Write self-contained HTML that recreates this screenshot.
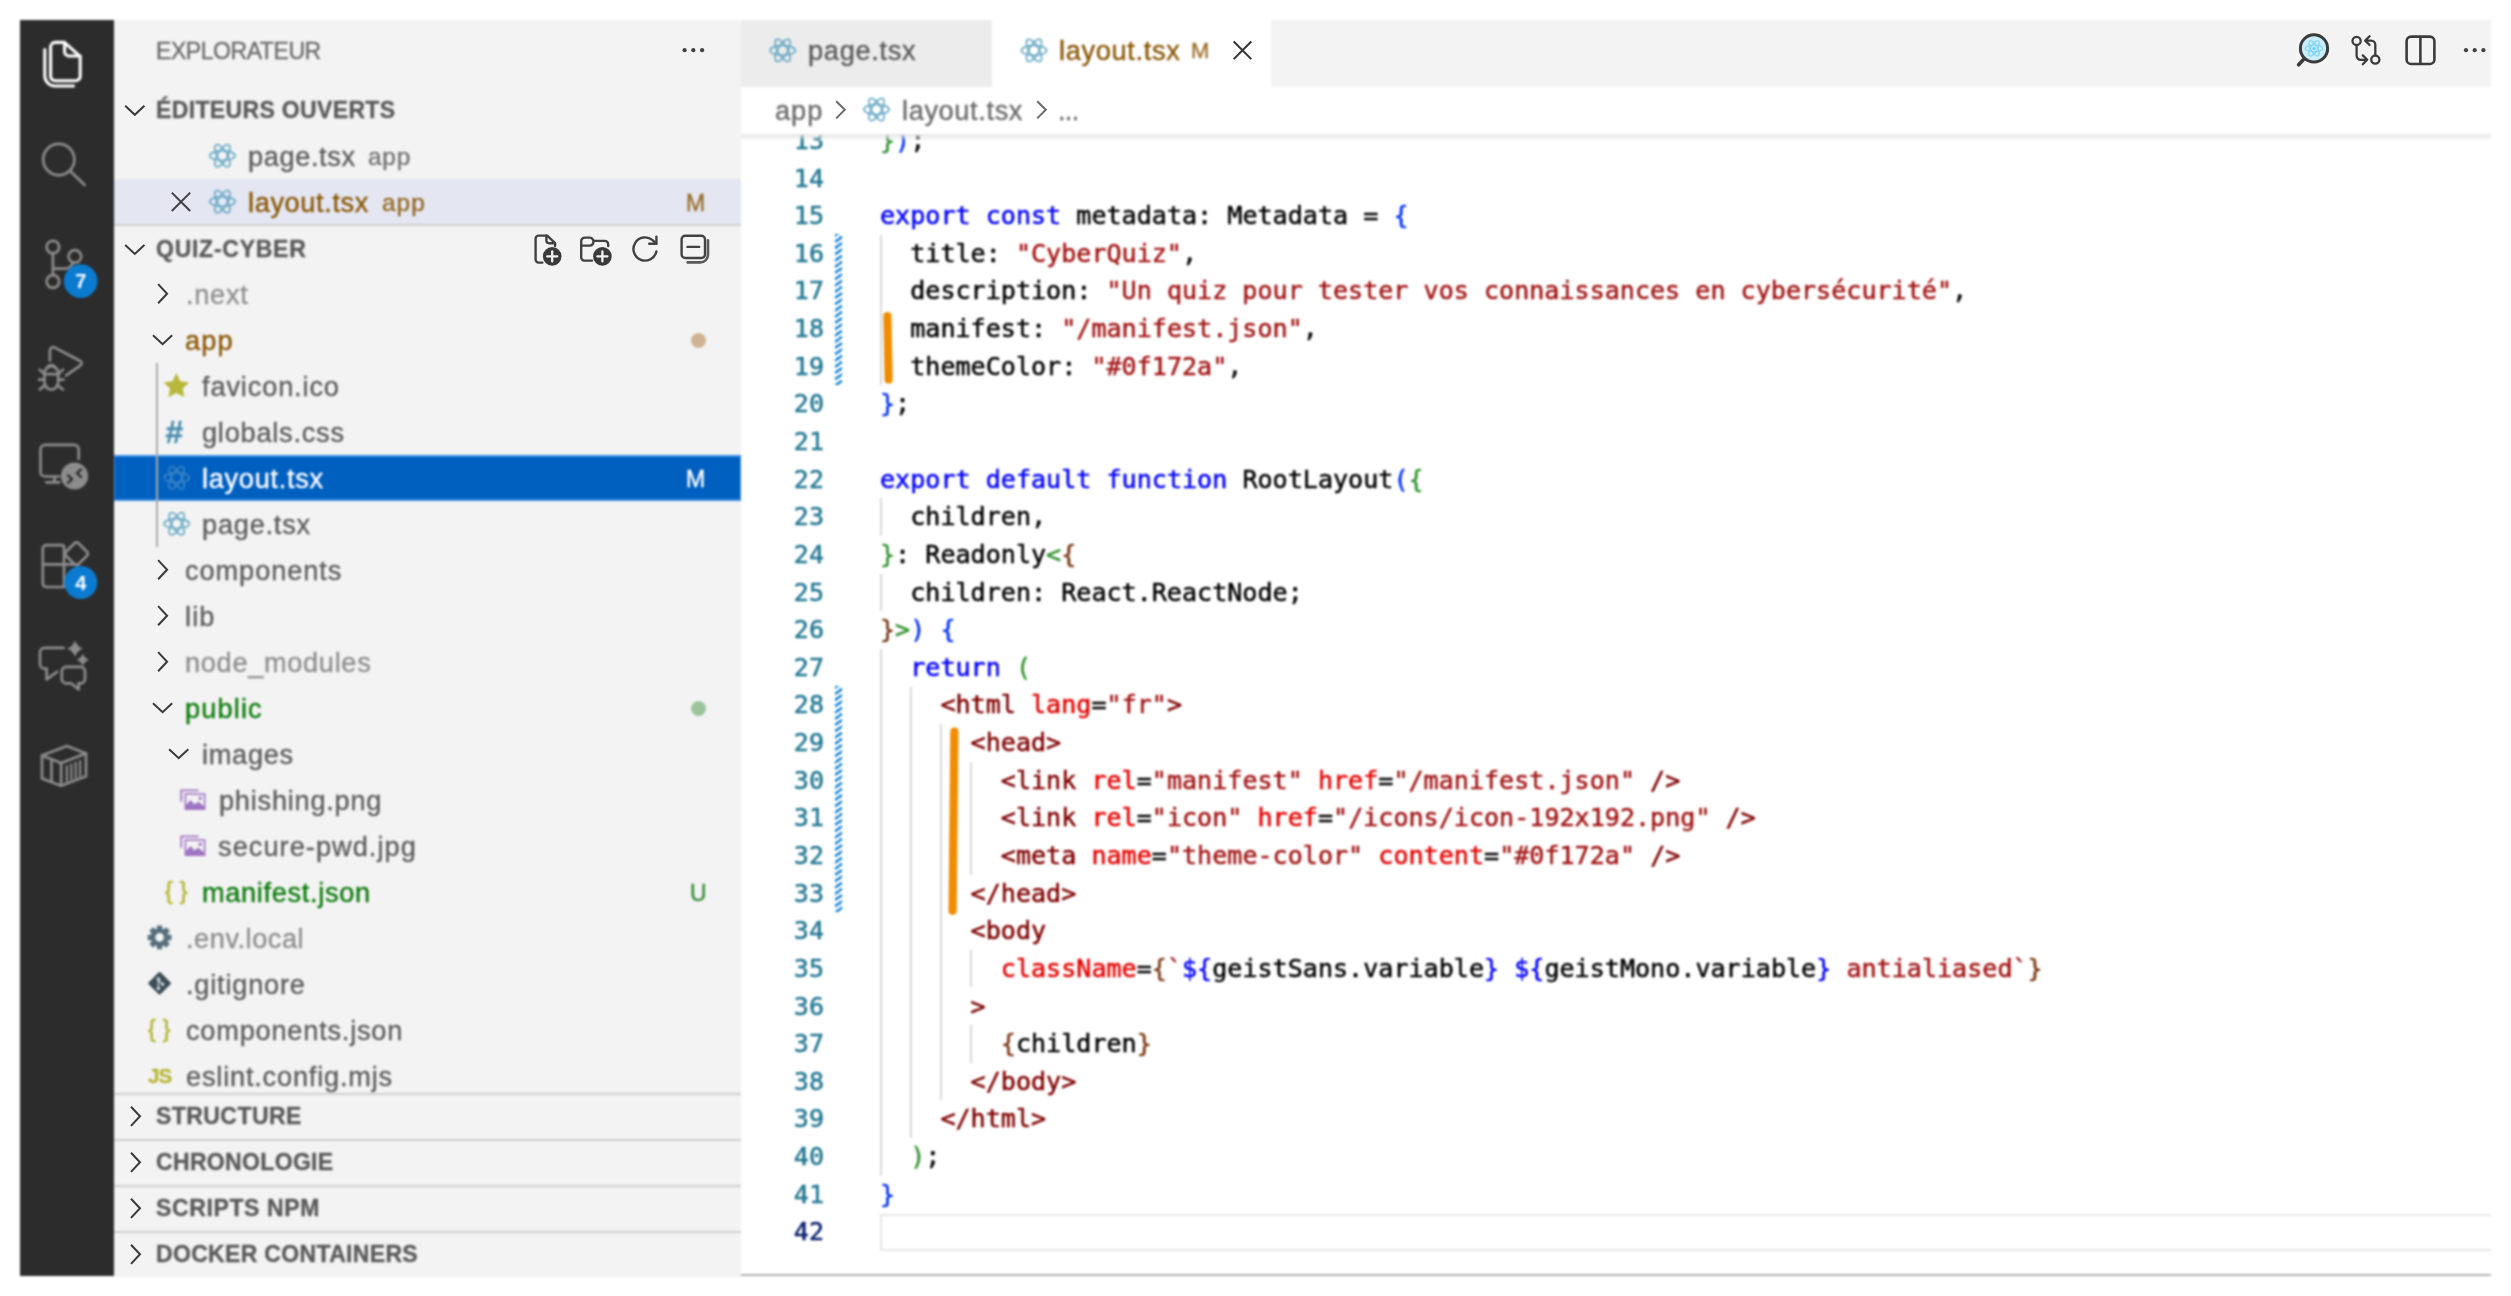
<!DOCTYPE html>
<html lang="fr"><head><meta charset="utf-8"><title>layout.tsx — quiz-cyber</title>
<style>
*{box-sizing:border-box;margin:0;padding:0}
html,body{width:2511px;height:1296px;background:#fff;overflow:hidden}
body{position:relative;font-family:"Liberation Sans", "DejaVu Sans", sans-serif;-webkit-font-smoothing:antialiased}
.abs{position:absolute}
#act{left:20px;top:20px;width:94px;height:1256px;background:#2c2c2c}
#side{left:114px;top:20px;width:627px;height:1256px;background:#f3f3f3;overflow:hidden}
#ed{left:741px;top:20px;width:1750px;height:1256px;background:#fff;overflow:hidden}
.t{will-change:transform;position:absolute;white-space:pre;line-height:46px;height:46px;font-size:27.18px;color:#5c5c5c;-webkit-text-stroke:0.35px currentColor}
.b{font-weight:bold}
.hd{font-size:23px;font-weight:bold;color:#5a5a5a}
.mod{color:#895503}
.unt{color:#0a7a0a}
.ign{color:#8e8e90}
.desc{font-size:24.4px;opacity:.9}
.code{will-change:transform;position:absolute;white-space:pre;font-family:"DejaVu Sans Mono", "Liberation Mono", monospace;font-size:25.09px;line-height:37.636px;height:37.636px;color:#000;-webkit-text-stroke:0.5px currentColor}
.ln{will-change:transform;position:absolute;white-space:pre;font-family:"DejaVu Sans Mono", "Liberation Mono", monospace;font-size:25.09px;line-height:37.636px;height:37.636px;color:#237893;text-align:right;width:60px;-webkit-text-stroke:0.5px currentColor}
.k{color:#0000ff}.s{color:#a31515}.tg{color:#800000}.at{color:#e50000}
.b1{color:#0431fa}.b2{color:#319331}.b3{color:#7b3814}
.ig{position:absolute;width:2px;background:#d8d8d8}
svg{position:absolute;overflow:visible}
</style></head>
<body>
<div id="root" style="position:absolute;left:0;top:0;width:2511px;height:1296px;filter:blur(0.8px)">
<div id="act" class="abs"></div>
<div id="side" class="abs"></div>
<div id="ed" class="abs"></div>
<div class="abs" style="left:114px;top:178.7px;width:627px;height:46.0px;background:#e4e6f1"></div>
<div class="abs" style="left:114px;top:454.7px;width:627px;height:46.0px;background:#0060c0;border:2px solid #3b8fe6;border-left-width:1px;border-right-width:1px"></div>
<div class="abs" style="left:114px;top:224.2px;width:627px;height:2px;background:#d0d0d0"></div>
<div class="abs" style="left:114px;top:1092.6px;width:627px;height:2px;background:#cfcfcf"></div>
<div class="abs" style="left:114px;top:1138.6px;width:627px;height:2px;background:#cfcfcf"></div>
<div class="abs" style="left:114px;top:1184.6px;width:627px;height:2px;background:#cfcfcf"></div>
<div class="abs" style="left:114px;top:1230.6px;width:627px;height:2px;background:#cfcfcf"></div>
<div class="t " style="left:155.8px;top:27.9px;letter-spacing:-0.44px;font-size:23px;color:#6a6a6a">EXPLORATEUR</div>
<div class="t hd" style="left:155.8px;top:87.2px;letter-spacing:0.35px;">ÉDITEURS OUVERTS</div>
<div class="t hd" style="left:155.8px;top:225.7px;letter-spacing:0.74px;">QUIZ-CYBER</div>
<div class="t " style="left:248.4px;top:133.7px;letter-spacing:0.62px;">page.tsx</div>
<div class="t desc" style="left:368.3px;top:134.2px;letter-spacing:0.80px;color:#626262">app</div>
<div class="t mod" style="left:248.4px;top:179.7px;letter-spacing:0.62px;">layout.tsx</div>
<div class="t desc mod" style="left:382.1px;top:180.2px;letter-spacing:1.00px;">app</div>
<div class="t mod" style="left:686.1px;top:179.6px;letter-spacing:2.54px;font-size:23px;opacity:.85">M</div>
<div class="t ign" style="left:185.7px;top:271.7px;letter-spacing:0.73px;">.next</div>
<div class="t mod" style="left:185.0px;top:317.7px;letter-spacing:1.12px;">app</div>
<div class="t " style="left:201.7px;top:363.7px;letter-spacing:0.86px;">favicon.ico</div>
<div class="t " style="left:201.7px;top:409.7px;letter-spacing:0.76px;">globals.css</div>
<div class="t " style="left:202.2px;top:455.7px;letter-spacing:0.71px;color:#fff">layout.tsx</div>
<div class="t " style="left:201.7px;top:501.7px;letter-spacing:0.77px;">page.tsx</div>
<div class="t " style="left:185.4px;top:547.7px;letter-spacing:0.93px;">components</div>
<div class="t " style="left:185.4px;top:593.7px;letter-spacing:1.10px;">lib</div>
<div class="t ign" style="left:185.4px;top:639.7px;letter-spacing:0.68px;">node_modules</div>
<div class="t unt" style="left:185.4px;top:685.7px;letter-spacing:1.13px;">public</div>
<div class="t " style="left:201.5px;top:731.7px;letter-spacing:0.71px;">images</div>
<div class="t " style="left:219.4px;top:777.7px;letter-spacing:0.76px;">phishing.png</div>
<div class="t " style="left:218.4px;top:823.7px;letter-spacing:1.04px;">secure-pwd.jpg</div>
<div class="t unt" style="left:202.3px;top:869.7px;letter-spacing:0.67px;">manifest.json</div>
<div class="t ign" style="left:185.6px;top:915.7px;letter-spacing:0.54px;">.env.local</div>
<div class="t " style="left:185.6px;top:961.7px;letter-spacing:0.79px;">.gitignore</div>
<div class="t " style="left:185.6px;top:1007.7px;letter-spacing:0.78px;">components.json</div>
<div class="t " style="left:185.6px;top:1053.7px;letter-spacing:0.80px;">eslint.config.mjs</div>
<div class="t " style="left:686.1px;top:455.6px;letter-spacing:2.54px;font-size:23px;color:#fff">M</div>
<div class="t unt" style="left:689.8px;top:869.6px;letter-spacing:1.59px;font-size:23px;opacity:.85">U</div>
<div class="abs" style="left:690.5px;top:332.7px;width:15px;height:15px;border-radius:50%;background:#cfb393"></div>
<div class="abs" style="left:690.5px;top:700.7px;width:15px;height:15px;border-radius:50%;background:#9cc49c"></div>
<div class="abs" style="left:156px;top:362.7px;width:2px;height:184.0px;background:#a9a9a9"></div>
<div class="abs" style="left:114px;top:1094.6px;width:627px;height:182px;background:#f3f3f3"></div>
<div class="abs" style="left:114px;top:1138.6px;width:627px;height:2px;background:#cfcfcf"></div>
<div class="abs" style="left:114px;top:1184.6px;width:627px;height:2px;background:#cfcfcf"></div>
<div class="abs" style="left:114px;top:1230.6px;width:627px;height:2px;background:#cfcfcf"></div>
<div class="t hd" style="left:155.8px;top:1093.3px;letter-spacing:0.44px;">STRUCTURE</div>
<div class="t hd" style="left:155.8px;top:1139.3px;letter-spacing:0.34px;">CHRONOLOGIE</div>
<div class="t hd" style="left:155.8px;top:1185.3px;letter-spacing:0.63px;">SCRIPTS NPM</div>
<div class="t hd" style="left:155.8px;top:1231.3px;letter-spacing:0.33px;">DOCKER CONTAINERS</div>
<div class="abs" style="left:741px;top:20px;width:1750px;height:66.7px;background:#f3f3f3"></div>
<div class="abs" style="left:741px;top:20px;width:251.2px;height:66.7px;background:#ececec"></div>
<div class="abs" style="left:992.2px;top:20px;width:279.2px;height:67px;background:#fff"></div>
<div class="t " style="left:808.1px;top:28.0px;letter-spacing:0.71px;color:#5a5a5a">page.tsx</div>
<div class="t mod" style="left:1059.4px;top:28.0px;letter-spacing:0.68px;">layout.tsx</div>
<div class="t mod" style="left:1190.6px;top:28.3px;letter-spacing:3.87px;font-size:22px;opacity:.85">M</div>
<div class="abs" style="left:880px;top:1213.7px;width:1611px;height:37.1px;border:2.6px solid #e6e6e6;border-right:none"></div>
<div class="ig" style="left:879.8px;top:234.8px;height:150.5px"></div>
<div class="ig" style="left:879.8px;top:498.3px;height:37.6px"></div>
<div class="ig" style="left:879.8px;top:573.6px;height:37.6px"></div>
<div class="ig" style="left:879.8px;top:648.8px;height:526.9px"></div>
<div class="ig" style="left:910.0px;top:686.5px;height:451.6px"></div>
<div class="ig" style="left:940.2px;top:724.1px;height:376.4px"></div>
<div class="ig" style="left:970.4px;top:761.7px;height:112.9px"></div>
<div class="ig" style="left:970.4px;top:949.9px;height:37.6px"></div>
<div class="ig" style="left:970.4px;top:1025.2px;height:37.6px"></div>
<div class="ln" style="left:764.0px;top:121.93px;color:#237893">13</div>
<div class="code" style="left:880.4px;top:121.93px"><span class="b2">}</span><span class="b1">)</span>;</div>
<div class="ln" style="left:764.0px;top:159.56px;color:#237893">14</div>
<div class="ln" style="left:764.0px;top:197.20px;color:#237893">15</div>
<div class="code" style="left:880.4px;top:197.20px"><span class="k">export</span> <span class="k">const</span> metadata<span>:</span> Metadata = <span class="b1">{</span></div>
<div class="ln" style="left:764.0px;top:234.84px;color:#237893">16</div>
<div class="code" style="left:880.4px;top:234.84px">  title: <span class="s">&quot;CyberQuiz&quot;</span>,</div>
<div class="ln" style="left:764.0px;top:272.47px;color:#237893">17</div>
<div class="code" style="left:880.4px;top:272.47px">  description: <span class="s">&quot;Un quiz pour tester vos connaissances en cybersécurité&quot;</span>,</div>
<div class="ln" style="left:764.0px;top:310.11px;color:#237893">18</div>
<div class="code" style="left:880.4px;top:310.11px">  manifest: <span class="s">&quot;/manifest.json&quot;</span>,</div>
<div class="ln" style="left:764.0px;top:347.74px;color:#237893">19</div>
<div class="code" style="left:880.4px;top:347.74px">  themeColor: <span class="s">&quot;#0f172a&quot;</span>,</div>
<div class="ln" style="left:764.0px;top:385.38px;color:#237893">20</div>
<div class="code" style="left:880.4px;top:385.38px"><span class="b1">}</span>;</div>
<div class="ln" style="left:764.0px;top:423.02px;color:#237893">21</div>
<div class="ln" style="left:764.0px;top:460.65px;color:#237893">22</div>
<div class="code" style="left:880.4px;top:460.65px"><span class="k">export</span> <span class="k">default</span> <span class="k">function</span> RootLayout<span class="b1">(</span><span class="b2">{</span></div>
<div class="ln" style="left:764.0px;top:498.29px;color:#237893">23</div>
<div class="code" style="left:880.4px;top:498.29px">  children,</div>
<div class="ln" style="left:764.0px;top:535.92px;color:#237893">24</div>
<div class="code" style="left:880.4px;top:535.92px"><span class="b2">}</span>: Readonly<span class="b2">&lt;</span><span class="b3">{</span></div>
<div class="ln" style="left:764.0px;top:573.56px;color:#237893">25</div>
<div class="code" style="left:880.4px;top:573.56px">  children: React.ReactNode;</div>
<div class="ln" style="left:764.0px;top:611.20px;color:#237893">26</div>
<div class="code" style="left:880.4px;top:611.20px"><span class="b3">}</span><span class="b2">&gt;</span><span class="b1">)</span> <span class="b1">{</span></div>
<div class="ln" style="left:764.0px;top:648.83px;color:#237893">27</div>
<div class="code" style="left:880.4px;top:648.83px">  <span class="k">return</span> <span class="b2">(</span></div>
<div class="ln" style="left:764.0px;top:686.47px;color:#237893">28</div>
<div class="code" style="left:880.4px;top:686.47px">    <span class="tg">&lt;html</span> <span class="at">lang</span>=<span class="s">&quot;fr&quot;</span><span class="tg">&gt;</span></div>
<div class="ln" style="left:764.0px;top:724.10px;color:#237893">29</div>
<div class="code" style="left:880.4px;top:724.10px">      <span class="tg">&lt;head&gt;</span></div>
<div class="ln" style="left:764.0px;top:761.74px;color:#237893">30</div>
<div class="code" style="left:880.4px;top:761.74px">        <span class="tg">&lt;link</span> <span class="at">rel</span>=<span class="s">&quot;manifest&quot;</span> <span class="at">href</span>=<span class="s">&quot;/manifest.json&quot;</span> <span class="tg">/&gt;</span></div>
<div class="ln" style="left:764.0px;top:799.38px;color:#237893">31</div>
<div class="code" style="left:880.4px;top:799.38px">        <span class="tg">&lt;link</span> <span class="at">rel</span>=<span class="s">&quot;icon&quot;</span> <span class="at">href</span>=<span class="s">&quot;/icons/icon-192x192.png&quot;</span> <span class="tg">/&gt;</span></div>
<div class="ln" style="left:764.0px;top:837.01px;color:#237893">32</div>
<div class="code" style="left:880.4px;top:837.01px">        <span class="tg">&lt;meta</span> <span class="at">name</span>=<span class="s">&quot;theme-color&quot;</span> <span class="at">content</span>=<span class="s">&quot;#0f172a&quot;</span> <span class="tg">/&gt;</span></div>
<div class="ln" style="left:764.0px;top:874.65px;color:#237893">33</div>
<div class="code" style="left:880.4px;top:874.65px">      <span class="tg">&lt;/head&gt;</span></div>
<div class="ln" style="left:764.0px;top:912.28px;color:#237893">34</div>
<div class="code" style="left:880.4px;top:912.28px">      <span class="tg">&lt;body</span></div>
<div class="ln" style="left:764.0px;top:949.92px;color:#237893">35</div>
<div class="code" style="left:880.4px;top:949.92px">        <span class="at">className</span>=<span class="b3">{</span><span class="s">`</span><span class="k">${</span>geistSans.variable<span class="k">}</span> <span class="k">${</span>geistMono.variable<span class="k">}</span><span class="s"> antialiased`</span><span class="b3">}</span></div>
<div class="ln" style="left:764.0px;top:987.56px;color:#237893">36</div>
<div class="code" style="left:880.4px;top:987.56px">      <span class="tg">&gt;</span></div>
<div class="ln" style="left:764.0px;top:1025.19px;color:#237893">37</div>
<div class="code" style="left:880.4px;top:1025.19px">        <span class="b3">{</span>children<span class="b3">}</span></div>
<div class="ln" style="left:764.0px;top:1062.83px;color:#237893">38</div>
<div class="code" style="left:880.4px;top:1062.83px">      <span class="tg">&lt;/body&gt;</span></div>
<div class="ln" style="left:764.0px;top:1100.46px;color:#237893">39</div>
<div class="code" style="left:880.4px;top:1100.46px">    <span class="tg">&lt;/html&gt;</span></div>
<div class="ln" style="left:764.0px;top:1138.10px;color:#237893">40</div>
<div class="code" style="left:880.4px;top:1138.10px">  <span class="b2">)</span>;</div>
<div class="ln" style="left:764.0px;top:1175.74px;color:#237893">41</div>
<div class="code" style="left:880.4px;top:1175.74px"><span class="b1">}</span></div>
<div class="ln" style="left:764.0px;top:1213.37px;color:#0b216f">42</div>
<div class="abs" style="left:835.2px;top:234.4px;width:7.2px;height:151.1px;background:repeating-linear-gradient(145.5deg,#1a84d8 0,#1a84d8 2.5px,#ffffff 2.5px,#ffffff 5.15px)"></div>
<div class="abs" style="left:835.2px;top:686.1px;width:7.2px;height:226.4px;background:repeating-linear-gradient(145.5deg,#1a84d8 0,#1a84d8 2.5px,#ffffff 2.5px,#ffffff 5.15px)"></div>
<svg style="left:0;top:0" width="2511" height="1296"><g stroke="#f08c00" stroke-width="8.2" stroke-linecap="round" fill="none"><path d="M887.4 316 L888.6 379.5"/><path d="M954.4 731.5 L952.6 910.8"/></g></svg>
<div class="abs" style="left:741px;top:86.7px;width:1750px;height:47px;background:#fff"></div>
<div class="abs" style="left:741px;top:133.7px;width:1750px;height:7px;background:linear-gradient(#e6e6e6,rgba(255,255,255,0))"></div>
<div class="t " style="left:774.5px;top:88.3px;letter-spacing:0.98px;color:#6b6b6b">app</div>
<div class="t " style="left:902.1px;top:88.3px;letter-spacing:0.63px;color:#6b6b6b">layout.tsx</div>
<div class="t " style="left:1057.6px;top:88.3px;letter-spacing:-0.68px;color:#6b6b6b">...</div>
<div class="abs" style="left:741px;top:1274.3px;width:1750px;height:1.7px;background:#b4b4b4"></div>
<svg style="left:0;top:0" width="2511" height="1296" viewBox="0 0 2511 1296"><g fill="none" stroke="#5fa3c1" stroke-width="1.5" opacity="1.0"><ellipse cx="222.4" cy="155.7" rx="12.6" ry="4.9" transform="rotate(0 222.4 155.7)"/><ellipse cx="222.4" cy="155.7" rx="12.6" ry="4.9" transform="rotate(60 222.4 155.7)"/><ellipse cx="222.4" cy="155.7" rx="12.6" ry="4.9" transform="rotate(120 222.4 155.7)"/></g><g fill="none" stroke="#5fa3c1" stroke-width="1.5" opacity="1.0"><ellipse cx="222.4" cy="201.7" rx="12.6" ry="4.9" transform="rotate(0 222.4 201.7)"/><ellipse cx="222.4" cy="201.7" rx="12.6" ry="4.9" transform="rotate(60 222.4 201.7)"/><ellipse cx="222.4" cy="201.7" rx="12.6" ry="4.9" transform="rotate(120 222.4 201.7)"/></g><g fill="none" stroke="#3f86c4" stroke-width="1.5" opacity="1.0"><ellipse cx="176.7" cy="477.7" rx="12.6" ry="4.9" transform="rotate(0 176.7 477.7)"/><ellipse cx="176.7" cy="477.7" rx="12.6" ry="4.9" transform="rotate(60 176.7 477.7)"/><ellipse cx="176.7" cy="477.7" rx="12.6" ry="4.9" transform="rotate(120 176.7 477.7)"/></g><g fill="none" stroke="#5fa3c1" stroke-width="1.5" opacity="1.0"><ellipse cx="176.7" cy="523.7" rx="12.6" ry="4.9" transform="rotate(0 176.7 523.7)"/><ellipse cx="176.7" cy="523.7" rx="12.6" ry="4.9" transform="rotate(60 176.7 523.7)"/><ellipse cx="176.7" cy="523.7" rx="12.6" ry="4.9" transform="rotate(120 176.7 523.7)"/></g><g fill="none" stroke="#5fa3c1" stroke-width="1.5" opacity="1.0"><ellipse cx="782.7" cy="50.4" rx="12.6" ry="4.9" transform="rotate(0 782.7 50.4)"/><ellipse cx="782.7" cy="50.4" rx="12.6" ry="4.9" transform="rotate(60 782.7 50.4)"/><ellipse cx="782.7" cy="50.4" rx="12.6" ry="4.9" transform="rotate(120 782.7 50.4)"/></g><g fill="none" stroke="#5fa3c1" stroke-width="1.5" opacity="1.0"><ellipse cx="1034.0" cy="50.4" rx="12.6" ry="4.9" transform="rotate(0 1034.0 50.4)"/><ellipse cx="1034.0" cy="50.4" rx="12.6" ry="4.9" transform="rotate(60 1034.0 50.4)"/><ellipse cx="1034.0" cy="50.4" rx="12.6" ry="4.9" transform="rotate(120 1034.0 50.4)"/></g><g fill="none" stroke="#5fa3c1" stroke-width="1.5" opacity="1.0"><ellipse cx="876.5" cy="109.5" rx="12.6" ry="4.9" transform="rotate(0 876.5 109.5)"/><ellipse cx="876.5" cy="109.5" rx="12.6" ry="4.9" transform="rotate(60 876.5 109.5)"/><ellipse cx="876.5" cy="109.5" rx="12.6" ry="4.9" transform="rotate(120 876.5 109.5)"/></g><polygon points="176.4,373.1 180.3,381.2 189.1,382.4 182.7,388.5 184.3,397.3 176.4,393.1 168.5,397.3 170.1,388.5 163.7,382.4 172.5,381.2" fill="#b7b73b"/></svg>
<div class="t" style="left:164.6px;top:408.9px;font-size:32px;color:#4a8fad;font-weight:bold;font-style:italic;letter-spacing:0">#</div>
<div class="t" style="left:164.6px;top:867.7px;font-size:23px;color:#b7b73b;font-weight:bold;letter-spacing:0.4px;font-weight:normal;-webkit-text-stroke:0.7px #b7b73b">{ }</div>
<div class="t" style="left:148.1px;top:1005.7px;font-size:23px;color:#b7b73b;font-weight:bold;letter-spacing:0.4px;font-weight:normal;-webkit-text-stroke:0.7px #b7b73b">{ }</div>
<div class="t" style="left:147.8px;top:1052.9px;font-size:20.5px;color:#b7b73b;font-weight:bold;letter-spacing:-0.9px">JS</div>
<svg style="left:0;top:0" width="2511" height="1296" viewBox="0 0 2511 1296"><g fill="none" stroke="#ffffff" stroke-width="3.1" stroke-linejoin="round" stroke-linecap="round"><path d="M64.4 42.4 H55.2 a4.6 4.6 0 0 0 -4.6 4.6 V76.2 a4.6 4.6 0 0 0 4.6 4.6 H75.6 a4.6 4.6 0 0 0 4.6 -4.6 V56.4 Z"/><path d="M64.6 42.6 V51.6 a4.4 4.4 0 0 0 4.4 4.4 H80"/><path d="M44.8 49.5 V75.8 a10.2 10.2 0 0 0 10.2 10.2 H73.6"/></g><g fill="none" stroke="#8c8c8c" stroke-width="2.7" stroke-linecap="round"><circle cx="58.8" cy="159.5" r="15.6"/><path d="M70.2 171 L84.6 185"/></g><g fill="none" stroke="#8c8c8c" stroke-width="2.7"><circle cx="52.9" cy="247.1" r="6.3"/><circle cx="74.9" cy="256.4" r="6.3"/><circle cx="52.9" cy="281.5" r="6.3"/><path d="M52.9 253.4 V275.2"/><path d="M52.9 268.6 H64.5 a9 9 0 0 0 8.6 -6.2"/></g><circle cx="80.7" cy="281.1" r="16.9" fill="#0a7bd0"/><g fill="none" stroke="#8c8c8c" stroke-width="2.7" stroke-linecap="round" stroke-linejoin="round"><path d="M49.9 360.6 V350.6 a3.4 3.4 0 0 1 5 -3 L80.2 361 a2.6 2.6 0 0 1 0 4.6 L66.2 375.4"/><path d="M44.4 373 a6.9 6.9 0 0 1 13.8 0 V381.6 a6.9 8 0 0 1 -13.8 0 Z"/><path d="M47.4 368.2 a4 4 0 0 1 7.8 0"/><path d="M44.4 374.2 H58.2"/><path d="M39.6 369.8 L44.4 373.6 M39 379.6 H44.4 M39.8 389.4 L45 385.4 M63 369.8 L58.2 373.6 M63.6 379.6 H58.2 M62.8 389.4 L57.6 385.4"/></g><g fill="none" stroke="#8c8c8c" stroke-width="2.7" stroke-linecap="round" stroke-linejoin="round"><path d="M78.7 459 V449.5 a4.6 4.6 0 0 0 -4.6 -4.6 H45.1 a4.6 4.6 0 0 0 -4.6 4.6 V471.9 a4.6 4.6 0 0 0 4.6 4.6 H59"/><path d="M54.5 476.5 V482.3 M46.3 482.3 H59.3"/></g><circle cx="74.5" cy="476" r="13.6" fill="#8c8c8c"/><g fill="none" stroke="#2c2c2c" stroke-width="2.4" stroke-linecap="round" stroke-linejoin="round"><path d="M68 475.4 L72 479.2 L68 483"/><path d="M81 469.4 L77 473.2 L81 477"/></g><g fill="none" stroke="#8c8c8c" stroke-width="2.7" stroke-linejoin="round"><path d="M64 545.2 H46.4 a3.6 3.6 0 0 0 -3.6 3.6 V583.4 a3.6 3.6 0 0 0 3.6 3.6 H79 M79.6 564.4 H42.8 M64 545.2 V587"/><rect x="67.7" y="544.9" width="17.6" height="17.6" rx="2.8" transform="rotate(45 76.5 553.7)"/></g><circle cx="80.85" cy="582.5" r="16.5" fill="#0a7bd0"/><g fill="none" stroke="#8c8c8c" stroke-width="2.7" stroke-linecap="round" stroke-linejoin="round"><path d="M63.6 647.9 H44.6 a4.6 4.6 0 0 0 -4.6 4.6 V664 a4.6 4.6 0 0 0 4.6 4.6 H46.6 V679.4 L57 671.8"/><path d="M66.2 666.8 H80.6 a4.4 4.4 0 0 1 4.4 4.4 V679 a4.4 4.4 0 0 1 -4.4 4.4 H78.6 V689.6 L71.4 683.4 H66.2 a4.4 4.4 0 0 1 -4.4 -4.4 V671.2 a4.4 4.4 0 0 1 4.4 -4.4 Z"/></g><path d="M75 640.4 Q77.13 646.47 83.2 648.6 Q77.13 650.73 75 656.8000000000001 Q72.87 650.73 66.8 648.6 Q72.87 646.47 75 640.4 Z" fill="#8c8c8c"/><path d="M82.8 653.4 Q84.46 658.14 89.2 659.8 Q84.46 661.46 82.8 666.1999999999999 Q81.14 661.46 76.39999999999999 659.8 Q81.14 658.14 82.8 653.4 Z" fill="#8c8c8c"/><g fill="none" stroke="#8c8c8c" stroke-width="2.7" stroke-linejoin="round" stroke-linecap="round"><path d="M42 755.6 L66.9 746.1 L86 753.4 L61.1 763 Z"/><path d="M42 755.6 V778.4 L61.1 785.7 L86 776.2 V753.4"/><path d="M61.1 763 V785.7 M51.5 759.4 V782"/></g><g stroke="#8c8c8c" stroke-width="2.2" stroke-linecap="round"><path d="M66.9 766 V781 M71.3 764.3 V779.3 M75.7 762.6 V777.6 M80.1 760.9 V775.9"/></g><path d="M181.3 801.8 V790.4 H198.6" fill="none" stroke="#a074c4" stroke-width="1.8"/><rect x="185.4" y="794.0" width="19.2" height="15.2" fill="#f3f3f3" stroke="#a074c4" stroke-width="1.6"/><path d="M185.4 809.2 V805.4 L190.6 800.0 L194.6 804.4 L198 801.4 L204.6 806.8 V809.2 Z" fill="#a074c4"/><circle cx="200.2" cy="798.2" r="1.7" fill="#a074c4"/><path d="M181.3 847.8 V836.4 H198.6" fill="none" stroke="#a074c4" stroke-width="1.8"/><rect x="185.4" y="840.0" width="19.2" height="15.2" fill="#f3f3f3" stroke="#a074c4" stroke-width="1.6"/><path d="M185.4 855.2 V851.4 L190.6 846.0 L194.6 850.4 L198 847.4 L204.6 852.8 V855.2 Z" fill="#a074c4"/><circle cx="200.2" cy="844.2" r="1.7" fill="#a074c4"/><path d="M170.89,935.23 L170.89,939.57 L167.97,939.36 L166.91,941.93 L169.12,943.85 L166.05,946.92 L164.13,944.71 L161.56,945.77 L161.77,948.69 L157.43,948.69 L157.64,945.77 L155.07,944.71 L153.15,946.92 L150.08,943.85 L152.29,941.93 L151.23,939.36 L148.31,939.57 L148.31,935.23 L151.23,935.44 L152.29,932.87 L150.08,930.95 L153.15,927.88 L155.07,930.09 L157.64,929.03 L157.43,926.11 L161.77,926.11 L161.56,929.03 L164.13,930.09 L166.05,927.88 L169.12,930.95 L166.91,932.87 L167.97,935.44 Z M164.5 937.4000000000001 a4.9 4.9 0 1 0 -9.8 0 a4.9 4.9 0 1 0 9.8 0 Z" fill="#566f7b" fill-rule="evenodd" stroke="#566f7b" stroke-width="1.2" stroke-linejoin="round"/><rect x="151.2" y="974.9000000000001" width="16.8" height="16.8" rx="1.6" transform="rotate(45 159.6 983.3000000000001)" fill="#3b4d57"/><g stroke="#d5dadd" stroke-width="1.3" fill="#d5dadd"><path d="M158.4 977.8000000000001 V988.8000000000001 M158.4 980.3000000000001 L162.4 983.9000000000001" fill="none"/><circle cx="158.4" cy="988.5000000000001" r="1.1"/><circle cx="162.6" cy="984.2" r="1.1"/><circle cx="158.4" cy="979.1" r="1.1"/></g></svg>
<div class="abs" style="left:64.7px;top:267.1px;width:32px;height:28px;line-height:28px;text-align:center;color:#fff;font-weight:bold;font-size:20px">7</div>
<div class="abs" style="left:64.85px;top:568.6px;width:32px;height:28px;line-height:28px;text-align:center;color:#fff;font-weight:bold;font-size:20px">4</div>
</div>
<svg style="left:0;top:0" width="2511" height="1296" viewBox="0 0 2511 1296"><path d="M125.2 105.8 L134.8 114.8 L144.4 105.8" fill="none" stroke="#3a3a3a" stroke-width="2.0" stroke-linejoin="miter"/><path d="M125.2 244.9 L134.8 253.9 L144.4 244.9" fill="none" stroke="#3a3a3a" stroke-width="2.0" stroke-linejoin="miter"/><path d="M131.0 1106.7 L140.0 1116.3 L131.0 1125.9" fill="none" stroke="#3a3a3a" stroke-width="2.0" stroke-linejoin="miter"/><path d="M131.0 1152.7 L140.0 1162.3 L131.0 1171.9" fill="none" stroke="#3a3a3a" stroke-width="2.0" stroke-linejoin="miter"/><path d="M131.0 1198.7 L140.0 1208.3 L131.0 1217.9" fill="none" stroke="#3a3a3a" stroke-width="2.0" stroke-linejoin="miter"/><path d="M131.0 1244.7 L140.0 1254.3 L131.0 1263.9" fill="none" stroke="#3a3a3a" stroke-width="2.0" stroke-linejoin="miter"/><path d="M158.1 284.1 L167.1 293.7 L158.1 303.3" fill="none" stroke="#3a3a3a" stroke-width="2.0" stroke-linejoin="miter"/><path d="M153.0 335.2 L162.6 344.2 L172.2 335.2" fill="none" stroke="#3a3a3a" stroke-width="2.0" stroke-linejoin="miter"/><path d="M158.1 560.1 L167.1 569.7 L158.1 579.3" fill="none" stroke="#3a3a3a" stroke-width="2.0" stroke-linejoin="miter"/><path d="M158.1 606.1 L167.1 615.7 L158.1 625.3" fill="none" stroke="#3a3a3a" stroke-width="2.0" stroke-linejoin="miter"/><path d="M158.1 652.1 L167.1 661.7 L158.1 671.3" fill="none" stroke="#3a3a3a" stroke-width="2.0" stroke-linejoin="miter"/><path d="M153.0 703.2 L162.6 712.2 L172.2 703.2" fill="none" stroke="#3a3a3a" stroke-width="2.0" stroke-linejoin="miter"/><path d="M169.1 749.2 L178.7 758.2 L188.3 749.2" fill="none" stroke="#3a3a3a" stroke-width="2.0" stroke-linejoin="miter"/><path d="M171.8 192.60000000000002 L190.2 211.0 M190.2 192.60000000000002 L171.8 211.0" stroke="#424242" stroke-width="2.0" fill="none"/><path d="M1233.7 41.5 L1251.3 59.099999999999994 M1251.3 41.5 L1233.7 59.099999999999994" stroke="#333" stroke-width="2.0" fill="none"/><path d="M836.2 101.2 L844.8 109.8 L836.2 118.4" fill="none" stroke="#6b6b6b" stroke-width="2.0" stroke-linejoin="miter"/><path d="M1037.2 101.2 L1045.8 109.8 L1037.2 118.4" fill="none" stroke="#6b6b6b" stroke-width="2.0" stroke-linejoin="miter"/><circle cx="684.6" cy="50.2" r="2.1" fill="#424242"/><circle cx="693.3" cy="50.2" r="2.1" fill="#424242"/><circle cx="702.1" cy="50.2" r="2.1" fill="#424242"/><circle cx="2466" cy="50.2" r="2.1" fill="#424242"/><circle cx="2474.7" cy="50.2" r="2.1" fill="#424242"/><circle cx="2483.4" cy="50.2" r="2.1" fill="#424242"/></svg>
<svg style="left:0;top:0" width="2511" height="1296" viewBox="0 0 2511 1296"><g fill="none" stroke="#424242" stroke-width="2.4" stroke-linecap="round" stroke-linejoin="round"><path d="M555.1 246 V243.2 L547.2 235.6 H538.6 a3 3 0 0 0 -3 3 V259.6 a3 3 0 0 0 3 3 H542.4"/><path d="M546.4 235.8 V240.6 a2.6 2.6 0 0 0 2.6 2.6 H555"/><path d="M592 260.6 H584.2 a3 3 0 0 1 -3 -3 V241.4 a3.8 3.8 0 0 1 3.8 -3.8 H589.6 a3.6 3.6 0 0 1 3.2 1.8 L593.6 240.9 H604.6 a3.6 3.6 0 0 1 3.6 3.6 V246"/><path d="M581.2 245.6 H589.8 a3.6 3.6 0 0 0 3.2 -2 L593.8 241"/><path d="M656.4 251.4 A11.6 11.6 0 1 1 652.6 240.2 L656.3 243.6"/><path d="M656.4 236.6 V243.8 H649.2"/><rect x="681.6" y="235.7" width="23.4" height="22.3" rx="3.6"/><path d="M687.5 246.9 H699.2"/></g><path d="M708 240.4 V254.8 a7.6 7.6 0 0 1 -7.6 7.6 H687.6" fill="none" stroke="#5a5a5a" stroke-width="2.6" stroke-linecap="round"/><circle cx="552.2" cy="256.4" r="9.3" fill="#3a3a3a"/><path d="M547.2 256.4 H557.2 M552.2 251.4 V261.4" stroke="#f3f3f3" stroke-width="2.3" stroke-linecap="round"/><circle cx="602.4" cy="256.4" r="9.3" fill="#3a3a3a"/><path d="M597.4 256.4 H607.4 M602.4 251.4 V261.4" stroke="#f3f3f3" stroke-width="2.3" stroke-linecap="round"/><circle cx="2314" cy="48.4" r="13.6" fill="#c9edfb" stroke="#3b3b3b" stroke-width="3"/><path d="M2304 59 L2298.6 64.8" stroke="#3b3b3b" stroke-width="3.6" stroke-linecap="round"/><g fill="none" stroke="#7fd4f5" stroke-width="1.2"><ellipse cx="2314" cy="48.4" rx="8.6" ry="3.4" transform="rotate(0 2314 48.4)"/><ellipse cx="2314" cy="48.4" rx="8.6" ry="3.4" transform="rotate(60 2314 48.4)"/><ellipse cx="2314" cy="48.4" rx="8.6" ry="3.4" transform="rotate(120 2314 48.4)"/></g><circle cx="2314" cy="48.4" r="1.5" fill="#5ccbf5"/><g fill="none" stroke="#3b3b3b" stroke-width="2.3" stroke-linecap="round" stroke-linejoin="round"><circle cx="2356.6" cy="40.9" r="4.1"/><circle cx="2375.3" cy="59.6" r="4.1"/><path d="M2356.6 45.2 V55.6 a4.2 4.2 0 0 0 4.2 4.2 H2366.4"/><path d="M2362.8 55.4 L2367.2 59.8 L2362.8 64.2"/><path d="M2375.3 55.2 V44.8 a4.2 4.2 0 0 0 -4.2 -4.2 H2366"/><path d="M2369.6 36.2 L2365.2 40.6 L2369.6 45"/></g><g fill="none" stroke="#3b3b3b" stroke-width="2.6"><rect x="2406.6" y="36.6" width="27.8" height="27.4" rx="4.6"/><path d="M2420.4 36.6 V64"/></g></svg>
</body></html>
